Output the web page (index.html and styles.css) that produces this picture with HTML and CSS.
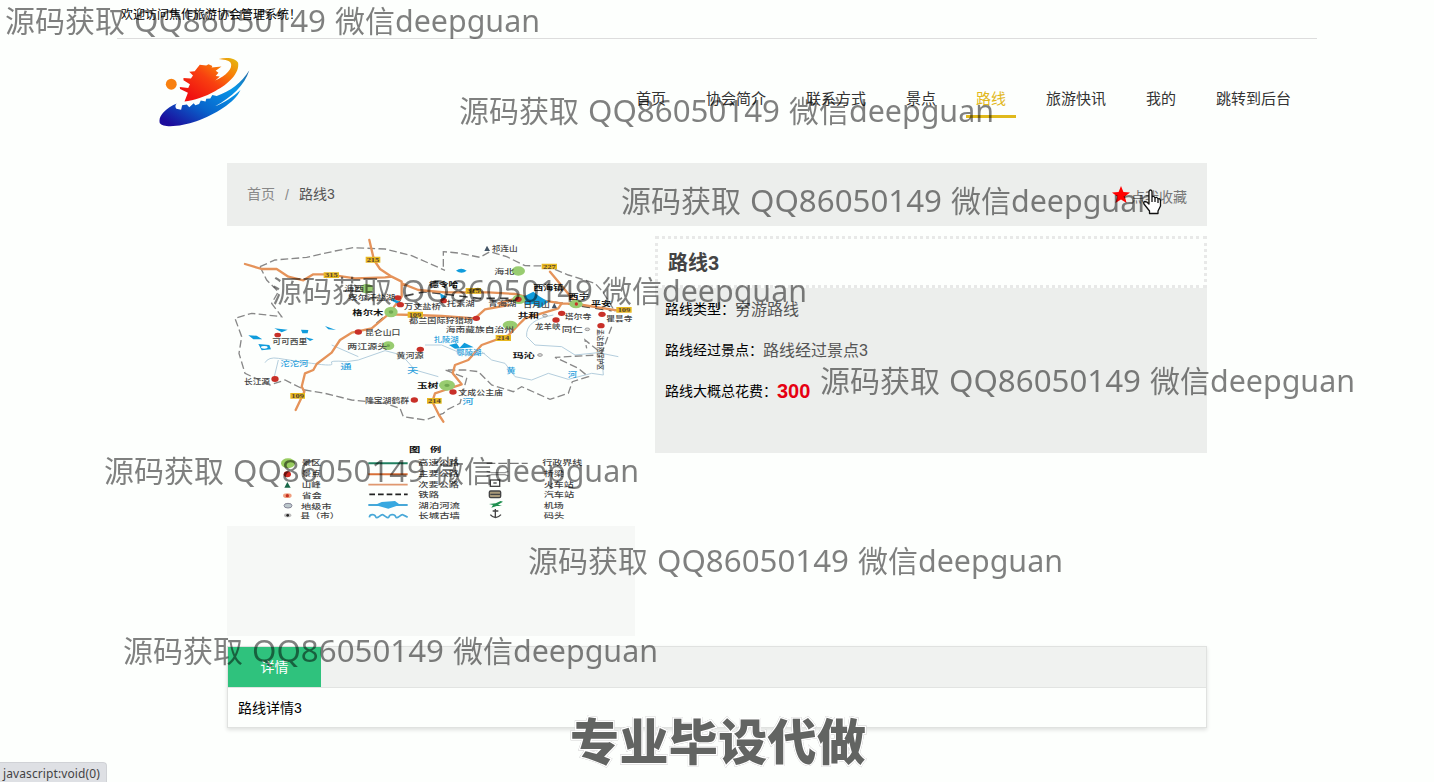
FILE: index.html
```html
<!DOCTYPE html>
<html lang="zh-CN">
<head>
<meta charset="utf-8">
<title>焦作旅游协会管理系统</title>
<link rel="stylesheet" href="styles.css">
</head>
<body>
<div class="topbar">欢迎访问焦作旅游协会管理系统！</div>
<header class="header">
  <svg class="logo" viewBox="50 30 280 215">
    <defs>
      <linearGradient id="gb" x1="0" y1="1" x2="1" y2="0"><stop offset="0.08" stop-color="#1c0c9c"/><stop offset="0.4" stop-color="#0864cc"/><stop offset="0.75" stop-color="#0898e8"/><stop offset="1" stop-color="#2868a0"/></linearGradient>
      <linearGradient id="gr" x1="0" y1="1" x2="1" y2="0"><stop offset="0.15" stop-color="#f01010"/><stop offset="0.5" stop-color="#f84010"/><stop offset="0.75" stop-color="#f88008"/><stop offset="1" stop-color="#e0c010"/></linearGradient>
    </defs>
    <circle cx="95" cy="116" r="16" fill="#f88010"/>
    <path fill="url(#gr)" d="M134 167L144 141L121 130L120 124L145 127L150 116L131 104L131 98L153 99L159 90L148 79L164 78L179 59L198 61L205 57L216 62L214 67L243 64L226 76L234 82L226 92L238 93L225 105C257 91 278 69 270 53C264 44 248 45 235 42C258 35 285 38 292 53C297 84 263 116 225 136C195 153 162 164 134 167Z"/>
    <path fill="url(#gb)" d="M111 173C76 188 56 211 61 230C72 247 128 239 169 225C224 205 283 170 299 133C277 153 250 171 224 181C274 154 311 119 325 75C302 113 268 137 229 151L216 148L210 158L198 159L196 167L182 164L177 174L166 178L161 172L148 184L141 176L127 178L124 191L110 188Q104 180 111 173Z"/>
  </svg>
  <nav class="nav">
    <a>首页</a><a>协会简介</a><a>联系方式</a><a>景点</a><a class="active">路线</a><a>旅游快讯</a><a>我的</a><a>跳转到后台</a>
  </nav>
</header>
<main class="main">
  <div class="crumbs">
    <div class="trail"><span>首页</span><span class="sep">/</span><span class="here">路线3</span></div>
    <div class="fav"><svg class="star" viewBox="0 0 20 20"><path fill="#f00" d="M10 0L12.7 6.8L20 7.3L14.3 11.8L16.2 19L10 15L3.8 19L5.7 11.8L0 7.3L7.3 6.8Z"/></svg><span>点我收藏</span></div>
  </div>
  <div class="cols">
    <section class="gallery">
      <svg class="map" viewBox="6 18 1224 870">
        <g fill="none" stroke="#b4cedd" stroke-width="3">
          <path d="M120 398Q130 380 160 385T260 400T320 400T365 395L400 390L480 362L530 375L570 420L640 440M160 390L148 440M320 345L400 380M600 345H650L720 375L780 370"/>
          <path d="M985 255Q900 270 905 320L930 345L1010 350L1050 375L1120 368L1180 380M770 365L800 390L840 400L870 440L920 450L970 430L1030 448L1100 430L1135 435L1130 375"/>
        </g>
        <g fill="none" stroke="#888" stroke-width="4" stroke-dasharray="23 10">
          <path d="M105 110L150 90L245 82L330 63L385 53L480 57L560 77L660 121M655 110L655 65L700 69L765 82L795 65L845 80L900 107L965 108L1030 135L1110 160L1133 185L1170 245M1160 290L1130 370L1080 330L1085 355M105 110L125 150L160 185L140 220L170 260L80 250L30 265L50 320L42 370L60 430L135 465L180 450L240 480L300 490L380 510L480 520L525 535L535 560L600 570L655 550L665 540L705 520L725 445L660 420L720 420L760 425L800 465L865 485L890 470L975 508L1030 490L1042 455L1090 440L1060 415L990 382L1120 375"/>
        </g>
        <g fill="none" stroke="#444" stroke-width="5" stroke-dasharray="25 16"><path d="M455 280L515 230L530 200L600 185L760 205L880 205L1030 222L1160 242"/></g>
        <path class="road" d="M60 102L110 117L155 117L190 140L235 151L265 133H310L390 145L480 142L500 140M433 30L447 90L465 117L500 140L530 155L530 200L490 253L440 295L380 308L345 330L320 368L275 402L265 420L240 430L230 470L238 485L212 540M530 160L580 180L660 187L790 187L870 192L930 208L1010 220M490 253L570 255L650 258L750 265L780 238L850 225M875 205L820 220L850 225M1010 220L1055 222L1000 155L975 125M1055 222L1180 242M1010 220L1000 235L900 265L880 285L850 316L770 345L730 390L690 405L683 430L710 463L660 480L630 490L622 515L642 555L655 575"/>
        <g fill="#109cdc">
          <path d="M70 316L95 317L112 328L85 328ZM100 342L133 345L138 358L110 361ZM148 295L188 299L170 307ZM228 299L250 300L248 310L232 310ZM240 322L266 328L255 333ZM300 288L333 300L310 298ZM693 122Q708 110 725 122Q710 134 693 122ZM895 200L925 185L945 200L970 215L945 234L925 222L900 225ZM500 205L525 215L520 222L500 212ZM645 190L665 200L650 215ZM672 345L695 340L704 353L718 338L746 352L690 356Z"/>
        </g>
        <g fill="#fff"><ellipse cx="118" cy="352" rx="10" ry="4"/></g>
        <g fill="#98cc70"><ellipse cx="425" cy="176" rx="20" ry="14"/><ellipse cx="498" cy="246" rx="20" ry="16"/><ellipse cx="490" cy="347" rx="18" ry="13"/><ellipse cx="880" cy="123" rx="20" ry="14"/><ellipse cx="855" cy="285" rx="22" ry="13"/><ellipse cx="666" cy="466" rx="24" ry="16"/><ellipse cx="1053" cy="222" rx="20" ry="13"/><ellipse cx="882" cy="208" rx="20" ry="14"/></g>
        <g fill="#70a850"><ellipse cx="498" cy="246" rx="7" ry="5"/><ellipse cx="666" cy="466" rx="8" ry="5"/><ellipse cx="490" cy="347" rx="5" ry="4"/></g>
        <g fill="#c83028"><ellipse cx="158" cy="315" rx="10" ry="7"/><ellipse cx="400" cy="306" rx="11" ry="8"/><ellipse cx="586" cy="358" rx="11" ry="8"/><ellipse cx="518" cy="203" rx="11" ry="7"/><ellipse cx="526" cy="224" rx="11" ry="8"/><ellipse cx="656" cy="212" rx="10" ry="8"/><ellipse cx="754" cy="265" rx="11" ry="8"/><ellipse cx="880" cy="208" rx="10" ry="8"/><ellipse cx="1010" cy="250" rx="11" ry="8"/><ellipse cx="993" cy="270" rx="11" ry="8"/><ellipse cx="1131" cy="253" rx="11" ry="8"/><ellipse cx="1128" cy="287" rx="11" ry="8"/><ellipse cx="150" cy="447" rx="11" ry="9"/><ellipse cx="568" cy="510" rx="11" ry="8"/><ellipse cx="684" cy="486" rx="11" ry="8"/><circle cx="1054" cy="222" r="5"/></g>
        <g fill="#ddd" stroke="#999" stroke-width="3"><ellipse cx="945" cy="375" rx="7" ry="4"/><ellipse cx="1087" cy="298" rx="7" ry="4"/><ellipse cx="960" cy="257" rx="7" ry="4"/></g>
        <path fill="#456" d="M778 63L786 47L795 63ZM980 235L988 219L996 235Z"/>
        <g fill="#e8b820"><path d="M422 80h44v18h-44zM296 127h46v17h-46zM548 245h46v18h-46zM722 174h46v17h-46zM950 101h46v17h-46zM812 315h46v18h-46zM1174 231h46v17h-46zM196 489h44v17h-44zM606 504h44v17h-44z"/></g>
        <g class="num">
          <text x="425" y="96" textLength="38" lengthAdjust="spacingAndGlyphs">215</text><text x="300" y="142" textLength="38" lengthAdjust="spacingAndGlyphs">315</text><text x="551" y="261" textLength="38" lengthAdjust="spacingAndGlyphs">109</text><text x="726" y="189" textLength="38" lengthAdjust="spacingAndGlyphs">315</text><text x="954" y="116" textLength="38" lengthAdjust="spacingAndGlyphs">227</text><text x="815" y="331" textLength="38" lengthAdjust="spacingAndGlyphs">214</text><text x="1178" y="246" textLength="38" lengthAdjust="spacingAndGlyphs">109</text><text x="199" y="504" textLength="38" lengthAdjust="spacingAndGlyphs">109</text><text x="609" y="519" textLength="38" lengthAdjust="spacingAndGlyphs">214</text>
        </g>
        <g class="place">
          <text x="800" y="62" textLength="78" lengthAdjust="spacingAndGlyphs">祁连山</text>
          <text x="808" y="131" textLength="60" lengthAdjust="spacingAndGlyphs">海北</text>
          <text x="358" y="184" textLength="60" lengthAdjust="spacingAndGlyphs">海西</text>
          <text x="370" y="211" textLength="140" lengthAdjust="spacingAndGlyphs">察尔汗盐湖</text>
          <text x="537" y="238" textLength="110" lengthAdjust="spacingAndGlyphs">万丈盐桥</text>
          <text x="552" y="280" textLength="192" lengthAdjust="spacingAndGlyphs">都兰国际狩猎场</text>
          <text x="665" y="227" textLength="84" lengthAdjust="spacingAndGlyphs">托素湖</text>
          <text x="790" y="227" textLength="84" lengthAdjust="spacingAndGlyphs">青海湖</text>
          <text x="895" y="232" textLength="80" lengthAdjust="spacingAndGlyphs">日月山</text>
          <text x="1019" y="267" textLength="80" lengthAdjust="spacingAndGlyphs">塔尔寺</text>
          <text x="930" y="297" textLength="76" lengthAdjust="spacingAndGlyphs">龙羊峡</text>
          <text x="1010" y="306" textLength="63" lengthAdjust="spacingAndGlyphs">同仁</text>
          <text x="1144" y="274" textLength="78" lengthAdjust="spacingAndGlyphs">瞿昙寺</text>
          <text x="662" y="305" textLength="205" lengthAdjust="spacingAndGlyphs">海南藏族自治州</text>
          <text x="420" y="315" textLength="106" lengthAdjust="spacingAndGlyphs">昆仑山口</text>
          <text x="142" y="341" textLength="105" lengthAdjust="spacingAndGlyphs">可可西里</text>
          <text x="367" y="358" textLength="120" lengthAdjust="spacingAndGlyphs">两江源头</text>
          <text x="514" y="383" textLength="82" lengthAdjust="spacingAndGlyphs">黄河源</text>
          <text x="57" y="461" textLength="78" lengthAdjust="spacingAndGlyphs">长江源</text>
          <text x="420" y="518" textLength="132" lengthAdjust="spacingAndGlyphs">隆宝湖鹤群</text>
          <text x="700" y="495" textLength="134" lengthAdjust="spacingAndGlyphs">文成公主庙</text>
          <text transform="translate(1119 298) rotate(90)" textLength="122" lengthAdjust="spacingAndGlyphs">孟达自然保护区</text>
        </g>
        <g class="place city">
          <text x="382" y="254" textLength="93" lengthAdjust="spacingAndGlyphs">格尔木</text>
          <text x="612" y="171" textLength="88" lengthAdjust="spacingAndGlyphs">德令哈</text>
          <text x="925" y="181" textLength="90" lengthAdjust="spacingAndGlyphs">西海镇</text>
          <text x="1030" y="208" textLength="62" lengthAdjust="spacingAndGlyphs">西宁</text>
          <text x="1098" y="227" textLength="60" lengthAdjust="spacingAndGlyphs">平安</text>
          <text x="878" y="265" textLength="64" lengthAdjust="spacingAndGlyphs">共和</text>
          <text x="863" y="383" textLength="66" lengthAdjust="spacingAndGlyphs">玛沁</text>
          <text x="576" y="474" textLength="64" lengthAdjust="spacingAndGlyphs">玉树</text>
          <text x="552" y="666" textLength="34" lengthAdjust="spacingAndGlyphs">图</text>
          <text x="615" y="666" textLength="34" lengthAdjust="spacingAndGlyphs">例</text>
        </g>
        <g class="place water">
          <text x="166" y="407" textLength="84" lengthAdjust="spacingAndGlyphs">沱沱河</text><text x="626" y="337" textLength="75" lengthAdjust="spacingAndGlyphs">扎陵湖</text><text x="694" y="374" textLength="75" lengthAdjust="spacingAndGlyphs">鄂陵湖</text>
          <text x="346" y="416" textLength="34" lengthAdjust="spacingAndGlyphs">通</text><text x="546" y="430" textLength="34" lengthAdjust="spacingAndGlyphs">天</text><text x="712" y="523" textLength="34" lengthAdjust="spacingAndGlyphs">河</text><text x="844" y="428" textLength="28" lengthAdjust="spacingAndGlyphs">黄</text><text x="1028" y="442" textLength="28" lengthAdjust="spacingAndGlyphs">河</text>
        </g>
        <g class="place">
          <text x="230" y="706" textLength="57" lengthAdjust="spacingAndGlyphs">景区</text><text x="230" y="739" textLength="57" lengthAdjust="spacingAndGlyphs">景点</text><text x="230" y="772" textLength="57" lengthAdjust="spacingAndGlyphs">山峰</text><text x="230" y="805" textLength="60" lengthAdjust="spacingAndGlyphs">省会</text><text x="228" y="836" textLength="92" lengthAdjust="spacingAndGlyphs">地级市</text><text x="226" y="865" textLength="118" lengthAdjust="spacingAndGlyphs">县（市）</text>
          <text x="580" y="706" textLength="122" lengthAdjust="spacingAndGlyphs">高速公路</text><text x="580" y="738" textLength="122" lengthAdjust="spacingAndGlyphs">主要公路</text><text x="580" y="770" textLength="122" lengthAdjust="spacingAndGlyphs">次要公路</text><text x="580" y="801" textLength="62" lengthAdjust="spacingAndGlyphs">铁路</text><text x="580" y="834" textLength="125" lengthAdjust="spacingAndGlyphs">湖泊河流</text><text x="580" y="865" textLength="125" lengthAdjust="spacingAndGlyphs">长城古墙</text>
          <text x="952" y="706" textLength="120" lengthAdjust="spacingAndGlyphs">行政界线</text><text x="956" y="738" textLength="60" lengthAdjust="spacingAndGlyphs">桥梁</text><text x="956" y="770" textLength="90" lengthAdjust="spacingAndGlyphs">火车站</text><text x="956" y="801" textLength="92" lengthAdjust="spacingAndGlyphs">汽车站</text><text x="956" y="834" textLength="60" lengthAdjust="spacingAndGlyphs">机场</text><text x="956" y="865" textLength="62" lengthAdjust="spacingAndGlyphs">码头</text>
        </g>
        <ellipse cx="189" cy="700" rx="21" ry="15" fill="#98cc60"/><ellipse cx="187" cy="733" rx="11" ry="9" fill="#d02820"/><path d="M178 773L187 756L197 773Z" fill="#186848"/>
        <ellipse cx="187" cy="797" rx="13" ry="7" fill="#f0a080"/><circle cx="187" cy="797" r="5" fill="#c43020"/><ellipse cx="189" cy="827" rx="12" ry="7" fill="#bcc8cc" stroke="#889" stroke-width="3"/><ellipse cx="188" cy="856" rx="11" ry="6" fill="#bbb"/><circle cx="188" cy="856" r="4" fill="#222"/>
        <g fill="none" stroke-width="6"><path stroke="#208060" d="M430 700H548"/><path stroke="#d87038" d="M430 733H548"/><path stroke="#e09870" stroke-width="5" d="M430 764H548"/><path stroke="#222" stroke-width="5" stroke-dasharray="17 9" d="M433 793H548"/><path stroke="#48a8d8" d="M430 825H548"/><path stroke="#48a8d8" stroke-width="5" d="M433 862Q434 854 442 854T452 860T462 860T472 854T482 860T492 860T502 854T512 860T522 860T532 854T548 862"/><path stroke="#777" stroke-width="4" stroke-dasharray="26 9" d="M785 700H908"/><path stroke="#999" stroke-width="4" d="M785 724L800 728H840L850 724M785 738L800 734H840L850 738"/></g>
        <path fill="#38a8e0" d="M450 825L470 816L510 813L525 824L490 836Z"/>
        <g fill="none" stroke="#444" stroke-width="4"><rect x="796" y="750" width="28" height="19"/><path d="M805 759h10"/><rect x="793" y="783" width="34" height="20" rx="4" fill="#a89878"/><path d="M796 793h30M811 837V864M796 854Q811 872 828 854M803 843H820"/></g>
        <path d="M792 822L812 820L827 813L834 815L819 824L831 828H815L799 833L804 825Z" fill="#209050"/>
      </svg>
      <div class="thumbs"></div>
    </section>
    <section class="info">
      <h1 class="title">路线3</h1>
      <div class="facts">
        <div class="row">路线类型：<span>穷游路线</span></div>
        <div class="row">路线经过景点：<span>路线经过景点3</span></div>
        <div class="row">路线大概总花费：<b>300</b></div>
      </div>
    </section>
  </div>
  <section class="detail">
    <div class="tabs"><span class="tab">详情</span></div>
    <div class="body">路线详情3</div>
  </section>
</main>
<svg class="overlay" viewBox="0 0 1434 782">
  <defs>
    <g id="wm"><text x="0" y="0" textLength="120">源码获取</text><text x="129" y="0" textLength="192" lengthAdjust="spacingAndGlyphs">QQ86050149</text><text x="330" y="0" textLength="60">微信</text><text x="390" y="0" textLength="145" lengthAdjust="spacingAndGlyphs">deepguan</text></g>
  </defs>
  <g class="wm"><use href="#wm" x="5" y="32"/><use href="#wm" x="459" y="122"/><use href="#wm" x="621" y="212"/><use href="#wm" x="272" y="302"/><use href="#wm" x="820" y="392"/><use href="#wm" x="104" y="482"/><use href="#wm" x="528" y="572"/><use href="#wm" x="123" y="662"/></g>
  <text class="banner" x="570" y="760" textLength="296">专业毕设代做</text>
  <path fill="#fff" stroke="#111" stroke-width="1.3" stroke-linejoin="round" d="M1149 203V192Q1149 190 1150.500 190T1152 192V197Q1154 195.500 1155 198Q1157 196.500 1158 199Q1160 198 1160.500 200.500V206L1158 211V213.500H1149.500V211L1144 204Q1143 202 1145 201.500Q1147 201.500 1149 204ZM1152 197V202M1155 198V202M1158 199V203"/>
</svg>
<div class="status">javascript:void(0)</div>
</body>
</html>
```
FILE: styles.css
```css
* { box-sizing: border-box; }
body { margin: 0; height: 782px; overflow: hidden; position: relative; background: #fdfffd; color: #000; font: 14px "Liberation Sans", "Noto Sans CJK SC", sans-serif; }
.topbar { width: 1200px; height: 39px; margin: 0 auto; padding: 1px 4px 0; border-bottom: 1px solid #ddd; font-size: 12px; line-height: 28px; }
.header { width: 1200px; height: 124px; margin: 0 auto; padding: 16px 16px 0 39px; display: flex; justify-content: space-between; align-items: flex-start; }
.logo { width: 95px; height: 73px; }
.nav { display: flex; gap: 20px; padding-top: 25px; }
.nav a { height: 38px; padding: 0 10px; border-bottom: 3px solid transparent; font-size: 15px; line-height: 38px; color: #333; }
.nav .active { color: #e2b81c; border-color: #e0b91c; }
.main { width: 980px; margin: 0 auto; }
.crumbs { height: 63px; padding: 0 20px; background: #eceeec; display: flex; justify-content: space-between; align-items: center; color: #888; }
.trail { display: flex; gap: 10px; line-height: 20px; padding-bottom: 1px; }
.sep { padding-top: 1px; }
.here { color: #555; }
.fav { display: flex; align-items: center; gap: 1px; color: #777; padding-top: 3px; }
.star { width: 18px; height: 18px; margin-top: -3px; }
.cols { display: flex; gap: 20px; padding-top: 10px; align-items: flex-start; }
.gallery { width: 408px; }
.map { display: block; width: 408px; height: 290px; }
.road { fill: none; stroke: #e5935a; stroke-width: 7px; stroke-linejoin: round; stroke-linecap: round; }
.place { font: 500 22px "Noto Sans CJK SC", sans-serif; fill: #444; }
.city { font-weight: 700; fill: #111; }
.water { fill: #2ba0dc; }
.num { font: bold 17px "Liberation Serif", serif; fill: #543; }
.thumbs { height: 110px; background: #f6f8f6; }
.info { width: 552px; }
.title { height: 52px; margin: 0; padding: 0 10px; border: 3px dotted #e8e9e8; font-size: 20px; line-height: 48px; color: #444; }
.facts { height: 165px; padding: 0 10px; background: #eceeec; }
.row { height: 41px; line-height: 43px; display: flex; }
.row span { font-size: 16px; color: #555; }
.row b { font-size: 20px; color: #e60012; line-height: 42px; }
.detail { height: 82px; margin-top: 10px; border: 1px solid #e0e2e0; box-shadow: 0 2px 4px rgba(0,0,0,.12); }
.tabs { height: 41px; background: #f0f2f0; border-bottom: 1px solid #e2e4e2; }
.tab { display: block; width: 93px; height: 40px; background: #2fc27d; color: #fff; line-height: 41px; text-align: center; }
.body { padding: 0 10px; line-height: 40px; }
.overlay { position: absolute; left: 0; top: 0; width: 1434px; height: 782px; }
.wm { font: 30px "Noto Sans", "Noto Sans CJK SC", sans-serif; fill: #000; opacity: .5; }
.banner { font: 900 49px "Noto Sans CJK SC", sans-serif; fill: #626462; stroke: #fff; stroke-width: 3px; paint-order: stroke; filter: drop-shadow(0 0 .5px #999); }
.status { position: absolute; left: 0; bottom: 0; width: 107px; height: 20px; padding-left: 3px; background: #dee0e4; border: 1px solid #d0d2d6; border-width: 1px 1px 0 0; border-radius: 0 4px 0 0; font: 12px/21px "Noto Sans", sans-serif; letter-spacing: .1px; color: #444; white-space: nowrap; }
```
